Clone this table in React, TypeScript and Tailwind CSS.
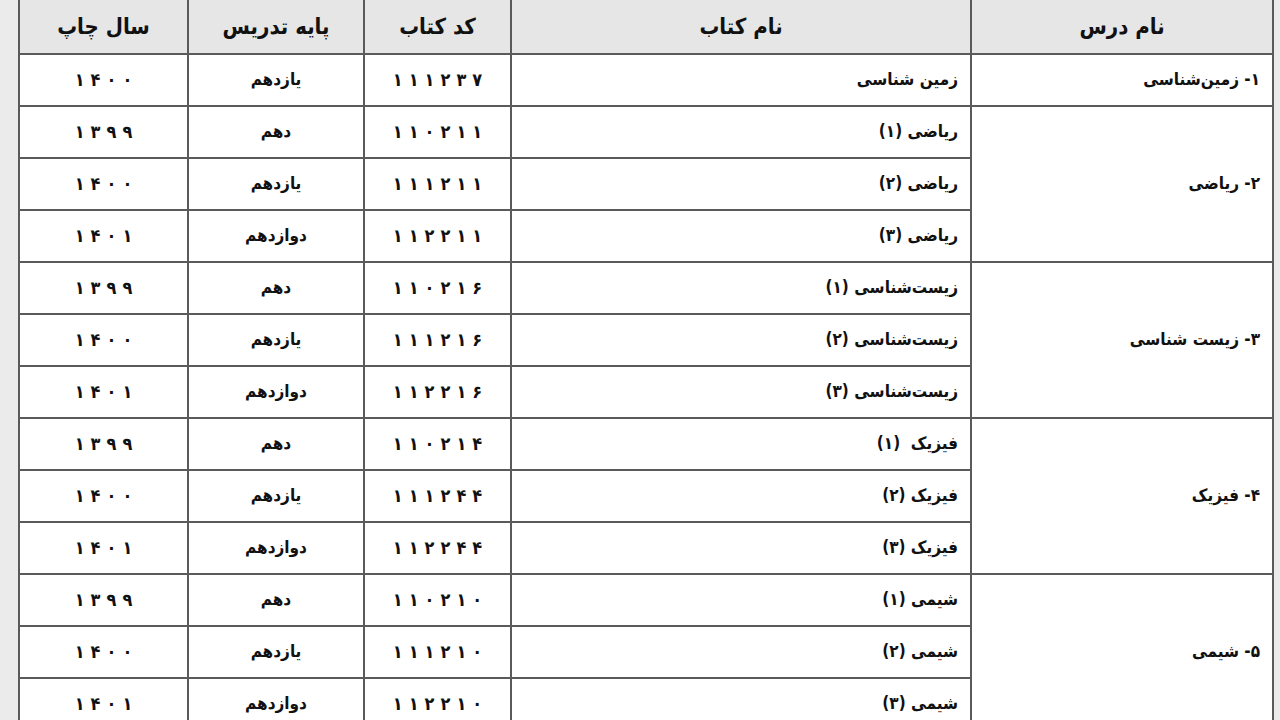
const groups = [
  {
    name: "۱- زمین‌شناسی",
    books: [{ title: "زمین شناسی", code: "۱۱۱۲۳۷", grade: "یازدهم", year: "۱۴۰۰" }],
  },
  {
    name: "۲- ریاضی",
    books: [
      { title: "ریاضی (۱)", code: "۱۱۰۲۱۱", grade: "دهم", year: "۱۳۹۹" },
      { title: "ریاضی (۲)", code: "۱۱۱۲۱۱", grade: "یازدهم", year: "۱۴۰۰" },
      { title: "ریاضی (۳)", code: "۱۱۲۲۱۱", grade: "دوازدهم", year: "۱۴۰۱" },
    ],
  },
  {
    name: "۳- زیست شناسی",
    books: [
      { title: "زیست‌شناسی (۱)", code: "۱۱۰۲۱۶", grade: "دهم", year: "۱۳۹۹" },
      { title: "زیست‌شناسی (۲)", code: "۱۱۱۲۱۶", grade: "یازدهم", year: "۱۴۰۰" },
      { title: "زیست‌شناسی (۳)", code: "۱۱۲۲۱۶", grade: "دوازدهم", year: "۱۴۰۱" },
    ],
  },
  {
    name: "۴- فیزیک",
    books: [
      { title: "فیزیک  (۱)", code: "۱۱۰۲۱۴", grade: "دهم", year: "۱۳۹۹" },
      { title: "فیزیک (۲)", code: "۱۱۱۲۴۴", grade: "یازدهم", year: "۱۴۰۰" },
      { title: "فیزیک (۳)", code: "۱۱۲۲۴۴", grade: "دوازدهم", year: "۱۴۰۱" },
    ],
  },
  {
    name: "۵- شیمی",
    books: [
      { title: "شیمی (۱)", code: "۱۱۰۲۱۰", grade: "دهم", year: "۱۳۹۹" },
      { title: "شیمی (۲)", code: "۱۱۱۲۱۰", grade: "یازدهم", year: "۱۴۰۰" },
      { title: "شیمی (۳)", code: "۱۱۲۲۱۰", grade: "دوازدهم", year: "۱۴۰۱" },
    ],
  },
];

const cell = "border-2 border-[#5a5a5a] h-[52px] p-0";
const head = "border-2 border-t-0 border-[#5a5a5a] h-[54px] text-center font-bold";

// persian digits in the scan are set wide apart
const Spaced = ({ value }: { value: string }) => (
  <span dir="ltr" className="inline-flex text-[18px]">
    {value.split("").map((ch, i) => (
      <span key={i} className="px-[3px]">
        {ch}
      </span>
    ))}
  </span>
);

export default function App() {
  return (
    <div className="h-[720px] w-[1280px] overflow-hidden bg-[#ebebeb] pl-[18px] pr-[8px] font-['DejaVu_Sans_Condensed','DejaVu_Sans',sans-serif] text-[#111]">
      <table dir="rtl" className="w-[1254px] table-fixed border-collapse bg-white font-bold">
        <colgroup>
          <col className="w-[302px]" />
          <col className="w-[460px]" />
          <col className="w-[147px]" />
          <col className="w-[176px]" />
          <col className="w-[169px]" />
        </colgroup>
        <thead>
          <tr className="bg-[#e6e6e6] text-[22px]">
            <th className={head}>نام درس</th>
            <th className={head}>نام کتاب</th>
            <th className={head}>کد کتاب</th>
            <th className={head}>پایه تدریس</th>
            <th className={head}>سال چاپ</th>
          </tr>
        </thead>
        <tbody className="text-[17px]">
          {groups.map((g) =>
            g.books.map((b, i) => (
              <tr key={b.code}>
                {i === 0 && (
                  <td rowSpan={g.books.length} className={`${cell} pr-[12px] text-right align-middle`}>
                    {g.name}
                  </td>
                )}
                <td className={`${cell} pr-[12px] text-right whitespace-pre`}>{b.title}</td>
                <td className={`${cell} text-center`}>
                  <Spaced value={b.code} />
                </td>
                <td className={`${cell} text-center`}>{b.grade}</td>
                <td className={`${cell} text-center`}>
                  <Spaced value={b.year} />
                </td>
              </tr>
            ))
          )}
        </tbody>
      </table>
    </div>
  );
}
